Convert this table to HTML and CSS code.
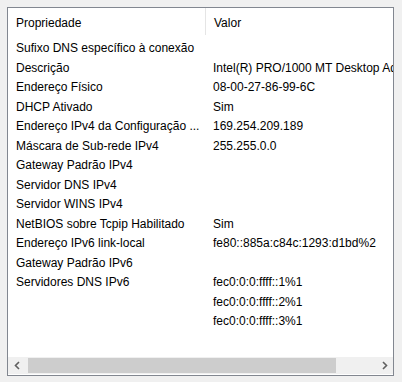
FILE: index.html
```html
<!DOCTYPE html>
<html lang="pt">
<head>
    <meta charset="UTF-8">
    <title>Detalhes da Conexão de Rede</title>
    <link rel="stylesheet" href="styles.css">
</head>
<body>
    <div class="details">
        <div class="header">
            <div class="col name">Propriedade</div>
            <div class="col value">Valor</div>
        </div>
        <div class="rows">
            <div class="row"><div class="col name">Sufixo DNS específico à conexão</div><div class="col value"></div></div>
            <div class="row"><div class="col name">Descrição</div><div class="col value">Intel(R) PRO/1000 MT Desktop Adapter</div></div>
            <div class="row"><div class="col name">Endereço Físico</div><div class="col value">08-00-27-86-99-6C</div></div>
            <div class="row"><div class="col name">DHCP Ativado</div><div class="col value">Sim</div></div>
            <div class="row"><div class="col name">Endereço IPv4 da Configuração ...</div><div class="col value">169.254.209.189</div></div>
            <div class="row"><div class="col name">Máscara de Sub-rede IPv4</div><div class="col value">255.255.0.0</div></div>
            <div class="row"><div class="col name">Gateway Padrão IPv4</div><div class="col value"></div></div>
            <div class="row"><div class="col name">Servidor DNS IPv4</div><div class="col value"></div></div>
            <div class="row"><div class="col name">Servidor WINS IPv4</div><div class="col value"></div></div>
            <div class="row"><div class="col name">NetBIOS sobre Tcpip Habilitado</div><div class="col value">Sim</div></div>
            <div class="row"><div class="col name">Endereço IPv6 link-local</div><div class="col value">fe80::885a:c84c:1293:d1bd%2</div></div>
            <div class="row"><div class="col name">Gateway Padrão IPv6</div><div class="col value"></div></div>
            <div class="row"><div class="col name">Servidores DNS IPv6</div><div class="col value">fec0:0:0:ffff::1%1</div></div>
            <div class="row"><div class="col name"></div><div class="col value">fec0:0:0:ffff::2%1</div></div>
            <div class="row"><div class="col name"></div><div class="col value">fec0:0:0:ffff::3%1</div></div>
        </div>
        <div class="hscroll">
            <div class="arrow">
                <svg width="8" height="9" viewBox="0 0 8 9"><path d="M6 1 L2.5 4.5 L6 8" fill="none" stroke="#606060" stroke-width="1.6"/></svg>
            </div>
            <div class="track"><div class="thumb"></div></div>
            <div class="arrow">
                <svg width="8" height="9" viewBox="0 0 8 9"><path d="M2 1 L5.5 4.5 L2 8" fill="none" stroke="#606060" stroke-width="1.6"/></svg>
            </div>
        </div>
    </div>
</body>
</html>
```

FILE: styles.css
```css
body {
    margin: 0;
    padding: 7px;
    background-color: #f0f0f0;
    font-family: "Liberation Sans", Arial, sans-serif;
    font-size: 12px;
    color: #000;
}
.details {
    width: 385px;
    height: 367px;
    border: 1px solid #828790;
    background-color: #fff;
    display: flex;
    flex-direction: column;
    overflow: hidden;
}
.header {
    display: flex;
    height: 31px;
    flex-shrink: 0;
}
.header .col {
    line-height: 31px;
}
.header .name {
    border-right: 1px solid #e5e5e5;
    height: 27px;
}
.rows {
    flex: 1;
}
.row {
    display: flex;
    height: 19.5px;
    line-height: 19.5px;
}
.col {
    white-space: nowrap;
    overflow: hidden;
}
.name {
    width: 189px;
    padding-left: 8px;
    flex-shrink: 0;
}
.value {
    padding-left: 8px;
    flex: 1;
}
.hscroll {
    display: flex;
    height: 17px;
    background-color: #f0f0f0;
    margin-bottom: 1px;
}
.arrow {
    width: 17px;
    display: flex;
    align-items: center;
    justify-content: center;
}
.track {
    flex: 1;
    display: flex;
    align-items: center;
    padding-left: 3px;
}
.thumb {
    width: 308px;
    height: 15px;
    background-color: #cdcdcd;
}
```
